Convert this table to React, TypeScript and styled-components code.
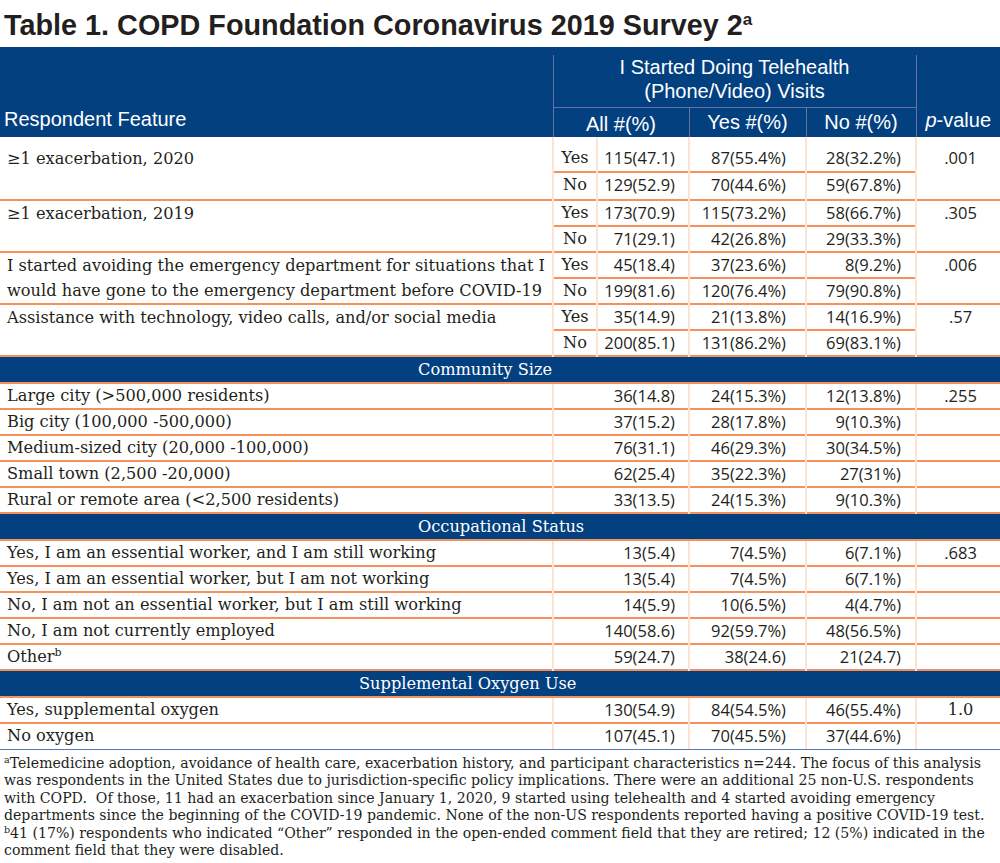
import React from 'react';
import styled, { createGlobalStyle } from 'styled-components';

const NAVY = '#034080';
const ORANGE = '#f4915c';
const PEACH = '#fde3d2';
const RULE = '#6a6fa5';
const INK = '#231f20';
const SERIF = '"DejaVu Serif", "Liberation Serif", serif';
const SANS = '"Liberation Sans", Arial, sans-serif';
const NUM = '"Open Sans", "DejaVu Sans", sans-serif';

const GlobalStyle = createGlobalStyle`
  body { margin: 0; background: #fff; }
`;

const Page = styled.div`
  width: 1000px;
  color: ${INK};
`;

const Title = styled.h1`
  margin: 0;
  box-sizing: border-box;
  height: 47px;
  padding: 8px 0 0 4px;
  font: bold 28.8px/34px ${SANS};
  white-space: nowrap;
  color: ${INK};
`;

const TitleSup = styled.sup`
  font-size: 17px;
  vertical-align: 10px;
  line-height: 0;
`;

const Table = styled.table`
  width: 1000px;
  border-collapse: collapse;
  table-layout: fixed;
`;

const Head = styled.thead`
  background: ${NAVY};
  color: #fff;
  font: 20px/24px ${SANS};
`;

const SpacerRow = styled.tr`
  height: 8px;
  & > td { padding: 0; }
`;

const HeadRow = styled.tr<{ $h: number }>`
  height: ${(p) => p.$h}px;
`;

const HeadCell = styled.th<{
  $align?: 'left' | 'center';
  $valign?: 'top' | 'middle' | 'bottom';
  $left?: boolean;
  $right?: boolean;
  $bottom?: boolean;
  $padBottom?: number;
  $padTop?: number;
}>`
  font-weight: normal;
  padding: ${(p) => p.$padTop ?? 0}px 0 ${(p) => p.$padBottom ?? 0}px
    ${(p) => (p.$align === 'left' ? 4 : 0)}px;
  text-align: ${(p) => p.$align ?? 'center'};
  vertical-align: ${(p) => p.$valign ?? 'middle'};
  white-space: nowrap;
  border-left: ${(p) => (p.$left ? `1px solid ${RULE}` : 'none')};
  border-right: ${(p) => (p.$right ? `1px solid ${RULE}` : 'none')};
  border-bottom: ${(p) => (p.$bottom ? `1px solid ${RULE}` : 'none')};
`;

const Italic = styled.i`
  font-style: italic;
`;

const Body = styled.tbody`
  font: 16.2px/24px ${SERIF};
`;

const Row = styled.tr<{ $h?: number; $padTop?: number }>`
  height: ${(p) => p.$h ?? 26}px;
  & > td {
    padding-top: ${(p) => p.$padTop ?? 0}px;
  }
`;

const LabelCell = styled.td<{ $first?: boolean; $lh?: number }>`
  padding: 0 0 0 7px;
  text-align: left;
  vertical-align: top;
  white-space: pre-line;
  line-height: ${(p) => p.$lh ?? 24}px;
  border-top: ${(p) => (p.$first ? 'none' : `2px solid ${ORANGE}`)};
`;

const YNCell = styled.td<{ $first?: boolean }>`
  padding: 0;
  text-align: center;
  vertical-align: top;
  border-left: 2px solid ${PEACH};
  border-top: ${(p) => (p.$first ? 'none' : `2px solid ${ORANGE}`)};
`;

const NumCell = styled.td<{ $pad: number; $first?: boolean }>`
  padding: 0 ${(p) => p.$pad}px 0 0;
  text-align: right;
  vertical-align: top;
  font: 16.5px/24px ${NUM};
  white-space: nowrap;
  border-left: 2px solid ${PEACH};
  border-top: ${(p) => (p.$first ? 'none' : `2px solid ${ORANGE}`)};
`;

const PCell = styled.td<{ $first?: boolean; $serif?: boolean }>`
  padding: 0 0 0 4px;
  text-align: center;
  vertical-align: top;
  font: ${(p) => (p.$serif ? `16.2px/24px ${SERIF}` : `16.5px/24px ${NUM}`)};
  border-left: 2px solid ${PEACH};
  border-top: ${(p) => (p.$first ? 'none' : `2px solid ${ORANGE}`)};
`;

const SectionCell = styled.td<{ $indent: number }>`
  padding: 0 0 0 ${(p) => p.$indent}px;
  background: ${NAVY};
  color: #fff;
  text-align: left;
  white-space: nowrap;
  border-top: 2px solid ${ORANGE};
  border-bottom: 2px solid ${ORANGE};
`;

const Sup = styled.sup`
  font-size: 11px;
  vertical-align: 6px;
  line-height: 0;
`;

const Notes = styled.div`
  border-top: 1.5px solid #5477b8;
  padding: 5px 0 0 4px;
  font: 14.1px/17.4px ${SERIF};
  color: ${INK};
`;

const NoteLine = styled.div`
  white-space: pre;
`;

const NoteSup = styled.sup`
  font-size: 9.5px;
  vertical-align: 5px;
  line-height: 0;
`;

type YN = [string, string, string, string];
type Group = { label: string; p: string; rows: [YN, YN] };

const groups: Group[] = [
  {
    label: '≥1 exacerbation, 2020',
    p: '.001',
    rows: [
      ['Yes', '115(47.1)', '87(55.4%)', '28(32.2%)'],
      ['No', '129(52.9)', '70(44.6%)', '59(67.8%)'],
    ],
  },
  {
    label: '≥1 exacerbation, 2019',
    p: '.305',
    rows: [
      ['Yes', '173(70.9)', '115(73.2%)', '58(66.7%)'],
      ['No', '71(29.1)', '42(26.8%)', '29(33.3%)'],
    ],
  },
  {
    label:
      'I started avoiding the emergency department for situations that I\nwould have gone to the emergency department before COVID-19',
    p: '.006',
    rows: [
      ['Yes', '45(18.4)', '37(23.6%)', '8(9.2%)'],
      ['No', '199(81.6)', '120(76.4%)', '79(90.8%)'],
    ],
  },
  {
    label: 'Assistance with technology, video calls, and/or social media',
    p: '.57',
    rows: [
      ['Yes', '35(14.9)', '21(13.8%)', '14(16.9%)'],
      ['No', '200(85.1)', '131(86.2%)', '69(83.1%)'],
    ],
  },
];

type SRow = { label: React.ReactNode; all: string; yes: string; no: string; p?: string; serifP?: boolean };
type Section = { title: string; indent: number; rows: SRow[] };

const sections: Section[] = [
  {
    title: 'Community Size',
    indent: 418,
    rows: [
      { label: 'Large city (>500,000 residents)', all: '36(14.8)', yes: '24(15.3%)', no: '12(13.8%)', p: '.255' },
      { label: 'Big city (100,000 -500,000)', all: '37(15.2)', yes: '28(17.8%)', no: '9(10.3%)' },
      { label: 'Medium-sized city (20,000 -100,000)', all: '76(31.1)', yes: '46(29.3%)', no: '30(34.5%)' },
      { label: 'Small town (2,500 -20,000)', all: '62(25.4)', yes: '35(22.3%)', no: '27(31%)' },
      { label: 'Rural or remote area (<2,500 residents)', all: '33(13.5)', yes: '24(15.3%)', no: '9(10.3%)' },
    ],
  },
  {
    title: 'Occupational Status',
    indent: 418,
    rows: [
      { label: 'Yes, I am an essential worker, and I am still working', all: '13(5.4)', yes: '7(4.5%)', no: '6(7.1%)', p: '.683' },
      { label: 'Yes, I am an essential worker, but I am not working', all: '13(5.4)', yes: '7(4.5%)', no: '6(7.1%)' },
      { label: 'No, I am not an essential worker, but I am still working', all: '14(5.9)', yes: '10(6.5%)', no: '4(4.7%)' },
      { label: 'No, I am not currently employed', all: '140(58.6)', yes: '92(59.7%)', no: '48(56.5%)' },
      {
        label: (
          <>
            Other<Sup>b</Sup>
          </>
        ),
        all: '59(24.7)',
        yes: '38(24.6)',
        no: '21(24.7)',
      },
    ],
  },
  {
    title: 'Supplemental Oxygen Use',
    indent: 359,
    rows: [
      { label: 'Yes, supplemental oxygen', all: '130(54.9)', yes: '84(54.5%)', no: '46(55.4%)', p: '1.0', serifP: true },
      { label: 'No oxygen', all: '107(45.1)', yes: '70(45.5%)', no: '37(44.6%)' },
    ],
  },
];

const GroupRows: React.FC<{ g: Group; first: boolean }> = ({ g, first }) => (
  <>
    <Row $h={first ? 35 : 26} $padTop={first ? 9 : 0}>
      <LabelCell rowSpan={2} $first={first} $lh={25}>
        {g.label}
      </LabelCell>
      <YNCell $first={first}>{g.rows[0][0]}</YNCell>
      <NumCell $pad={13} $first={first}>{g.rows[0][1]}</NumCell>
      <NumCell $pad={19} $first={first}>{g.rows[0][2]}</NumCell>
      <NumCell $pad={14} $first={first}>{g.rows[0][3]}</NumCell>
      <PCell rowSpan={2} $first={first}>
        {g.p}
      </PCell>
    </Row>
    <Row $h={first ? 28 : 26}>
      <YNCell>{g.rows[1][0]}</YNCell>
      <NumCell $pad={13}>{g.rows[1][1]}</NumCell>
      <NumCell $pad={19}>{g.rows[1][2]}</NumCell>
      <NumCell $pad={14}>{g.rows[1][3]}</NumCell>
    </Row>
  </>
);

const SectionRows: React.FC<{ s: Section }> = ({ s }) => (
  <>
    <Row $h={27}>
      <SectionCell colSpan={6} $indent={s.indent}>
        {s.title}
      </SectionCell>
    </Row>
    {s.rows.map((r, i) => (
      <Row key={i}>
        <LabelCell>{r.label}</LabelCell>
        <NumCell colSpan={2} $pad={13}>
          {r.all}
        </NumCell>
        <NumCell $pad={19}>{r.yes}</NumCell>
        <NumCell $pad={14}>{r.no}</NumCell>
        <PCell $serif={r.serifP}>{r.p ?? ''}</PCell>
      </Row>
    ))}
  </>
);

export default function App() {
  return (
    <Page>
      <GlobalStyle />
      <Title>
        Table 1. COPD Foundation Coronavirus 2019 Survey 2<TitleSup>a</TitleSup>
      </Title>
      <Table>
        <colgroup>
          <col style={{ width: 553 }} />
          <col style={{ width: 44 }} />
          <col style={{ width: 92 }} />
          <col style={{ width: 117 }} />
          <col style={{ width: 110 }} />
          <col style={{ width: 84 }} />
        </colgroup>
        <Head>
          <SpacerRow>
            <td colSpan={6} />
          </SpacerRow>
          <HeadRow $h={52}>
            <HeadCell rowSpan={2} $align="left" $valign="bottom" $padBottom={6}>
              Respondent Feature
            </HeadCell>
            <HeadCell colSpan={4} $valign="top" $left $right $bottom>
              I Started Doing Telehealth
              <br />
              (Phone/Video) Visits
            </HeadCell>
            <HeadCell rowSpan={2} $valign="bottom" $padBottom={5} $left>
              <Italic>p</Italic>-value
            </HeadCell>
          </HeadRow>
          <HeadRow $h={30}>
            <HeadCell colSpan={2} $left $right $padTop={4}>
              All #(%)
            </HeadCell>
            <HeadCell $right>Yes #(%)</HeadCell>
            <HeadCell $right>No #(%)</HeadCell>
          </HeadRow>
        </Head>
        <Body>
          {groups.map((g, i) => (
            <GroupRows key={i} g={g} first={i === 0} />
          ))}
          {sections.map((s, i) => (
            <SectionRows key={i} s={s} />
          ))}
        </Body>
      </Table>
      <Notes>
        <NoteLine>
          <NoteSup>a</NoteSup>Telemedicine adoption, avoidance of health care, exacerbation history, and participant
          characteristics n=244. The focus of this analysis
        </NoteLine>
        <NoteLine>
          was respondents in the United States due to jurisdiction-specific policy implications. There were an additional 25
          non-U.S. respondents
        </NoteLine>
        <NoteLine>
          {'with COPD.  Of those, 11 had an exacerbation since January 1, 2020, 9 started using telehealth and 4 started avoiding emergency'}
        </NoteLine>
        <NoteLine>
          departments since the beginning of the COVID-19 pandemic. None of the non-US respondents reported having a positive
          COVID-19 test.
        </NoteLine>
        <NoteLine>
          <NoteSup>b</NoteSup>41 (17%) respondents who indicated “Other” responded in the open-ended comment field that they
          are retired; 12 (5%) indicated in the
        </NoteLine>
        <NoteLine>comment field that they were disabled.</NoteLine>
      </Notes>
    </Page>
  );
}
